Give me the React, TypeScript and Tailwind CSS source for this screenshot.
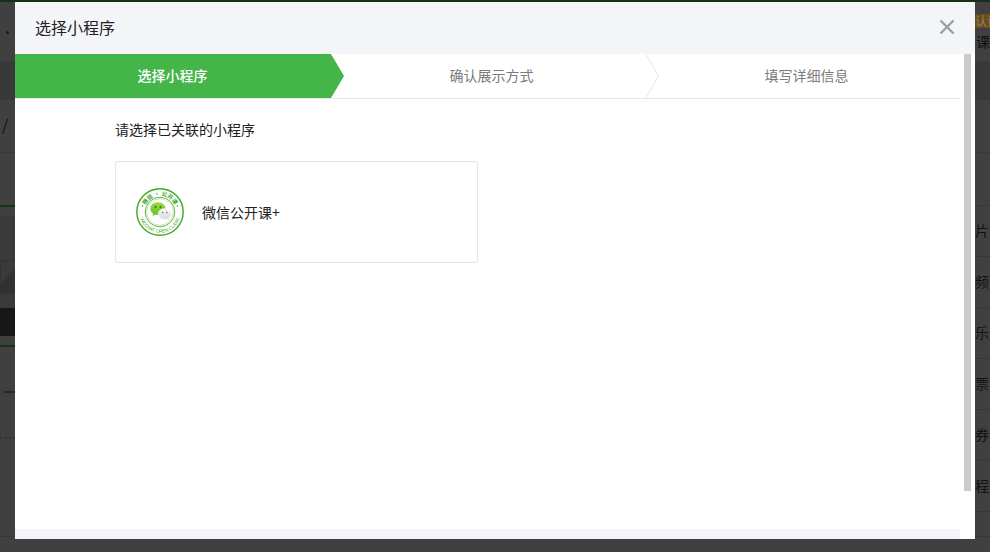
import { useState } from 'react'
import clsx from 'clsx'

const steps = ['选择小程序', '确认展示方式', '填写详细信息']

const mediaItems = ['片', '频', '乐', '票', '券', '程']

const programs = [{ id: 1, name: '微信公开课+' }]

function ProgramLogo() {
  return (
    <svg viewBox="0 0 48 48" className="h-12 w-12 shrink-0" aria-hidden="true">
      <defs>
        <path id="logo-top" d="M7.8 24a16.2 16.2 0 0 1 32.4 0" />
        <path id="logo-bottom" d="M3.2 24a20.8 20.8 0 0 0 41.6 0" />
        <linearGradient id="logo-green" x1="0" y1="0" x2="0" y2="1">
          <stop offset="0" stopColor="#9bdc45" />
          <stop offset="1" stopColor="#5fbd22" />
        </linearGradient>
        <linearGradient id="logo-grey" x1="0" y1="0" x2="0" y2="1">
          <stop offset="0" stopColor="#f7f8fa" />
          <stop offset="1" stopColor="#d5d8dc" />
        </linearGradient>
      </defs>
      <circle cx="24" cy="24" r="23.2" fill="#fff" stroke="#43ab22" strokeWidth="1.4" />
      <circle cx="24" cy="24" r="14.8" fill="none" stroke="#5cb840" strokeWidth="1" />
      <circle cx="24" cy="24" r="13.3" fill="none" stroke="#a5d98f" strokeWidth="0.6" />
      <g fill="#3aa31d" textAnchor="middle">
        <text fontSize="5.6" fontWeight="700" fontFamily="'Noto Sans CJK SC', sans-serif">
          <textPath href="#logo-top" startOffset="50%">
            微信 · 公开课
          </textPath>
        </text>
        <text fontSize="4.7" fontFamily="'Liberation Sans', sans-serif">
          <textPath href="#logo-bottom" startOffset="50%">
            WECHAT OPEN CLASS
          </textPath>
        </text>
      </g>
      <circle cx="6.6" cy="18" r="0.8" fill="#43ab22" />
      <circle cx="41.4" cy="18" r="0.8" fill="#43ab22" />
      <path
        d="M22 14.2c-4.3 0-7.6 2.8-7.6 6.5 0 2 1 3.8 2.8 5l-.8 2.4 3-1.5c.8.3 1.7.4 2.6.4 4.3 0 7.6-2.8 7.6-6.300s-3.300-6.500-7.600-6.500z"
        fill="url(#logo-green)"
      />
      <path
        d="M28.800 20.600c-3.700 0-6.600 2.400-6.600 5.400s2.900 5.400 6.600 5.400c.8 0 1.500-.1 2.200-.3l2.400 1.300-.6-2c1.600-1 2.600-2.600 2.600-4.400 0-3-2.900-5.400-6.600-5.400z"
        fill="url(#logo-grey)"
        stroke="#fff"
        strokeWidth="0.4"
      />
      <g fill="#2d6f16">
        <circle cx="19.5" cy="19" r="1" />
        <circle cx="24.500" cy="19" r="1" />
      </g>
      <g fill="#777">
        <circle cx="26.700" cy="24.600" r="0.8" />
        <circle cx="30.900" cy="24.600" r="0.8" />
      </g>
    </svg>
  )
}

function StepArrow({ active }: { active: boolean }) {
  return (
    <svg viewBox="0 0 14 44" className="absolute top-0 left-full z-10 h-11 w-3.5" aria-hidden="true">
      {active ? (
        <path d="M0 0h1l13 22L1 44H0z" fill="#44b549" />
      ) : (
        <path d="M0.5 0l13 22-13 22" fill="none" stroke="#e7e7eb" />
      )}
    </svg>
  )
}

/* The dimmed editor page under the dialog */
function EditorPage() {
  return (
    <div className="flex h-full flex-col overflow-hidden bg-[#404040] text-sm text-[#111]" aria-hidden="true">
      <div className="h-0.5 shrink-0 bg-[#162f16]" />
      <div className="flex h-15 shrink-0 justify-between">
        <div className="flex w-3.75 items-center justify-center">
          <span className="h-0.75 w-0.75 rounded-full bg-[#1c1c1c]" />
        </div>
        <div className="flex w-3.75 flex-col overflow-hidden pt-3">
          <span className="h-3.5 bg-[#6b4c18] text-xs leading-3.5 whitespace-nowrap text-[#8a8478]">认证</span>
          <span className="flex justify-end leading-6.5 whitespace-nowrap">开课</span>
        </div>
      </div>
      <div className="h-9.5 shrink-0 border-y border-[#353535] bg-[#393939]" />
      <div className="h-13 shrink-0 pl-0.5 text-base leading-12">/</div>
      <div className="flex flex-1 justify-between border-t border-[#393939]">
        <div className="flex w-3.75 flex-col">
          <div className="h-13" />
          <div className="h-0.5 bg-[#143314]" />
          <div className="h-2.25" />
          <div className="h-23 bg-[#3a3a3a] pt-11">
            <div className="rounded-l-xs border border-r-0 border-[#323232]">
              <svg viewBox="0 0 15 32" preserveAspectRatio="none" className="h-8 w-full">
                <path d="M0 22L15 8v24H0z" fill="#313131" />
              </svg>
            </div>
          </div>
          <div className="h-7 bg-[#171717]" />
          <div className="h-2.25" />
          <div className="h-0.5 bg-[#143314]" />
          <div className="h-11" />
          <div className="ml-1 h-0.5 bg-[#262626]" />
          <div className="mt-11 border-t-2 border-dotted border-[#333]" />
        </div>
        <ul className="w-3.75">
          <li className="h-13.25 border-b border-[#383838]" />
          {mediaItems.map((item) => (
            <li key={item} className="h-12.75 border-b border-[#383838] leading-12">
              {item}
            </li>
          ))}
        </ul>
      </div>
      <div className="h-4 shrink-0 border-t border-[#383838]" />
    </div>
  )
}

export default function App() {
  const [selected, setSelected] = useState<number | null>(null)
  const currentStep = 0

  return (
    <div className="h-screen font-['Noto_Sans_CJK_SC',sans-serif]">
      <EditorPage />

      <div className="fixed inset-0 flex px-3.75 pt-0.5 pb-3.25">
        <div role="dialog" aria-labelledby="dialog-title" className="flex flex-1 flex-col bg-white">
          {/* Header */}
          <header className="flex h-13 shrink-0 items-center justify-between bg-[#f4f5f9] px-5 pb-0.5">
            <h3 id="dialog-title" className="text-base text-[#222]">
              选择小程序
            </h3>
            <button type="button" aria-label="关闭">
              <svg viewBox="0 0 16 16" className="h-4 w-4" fill="none" stroke="#9c9ea0" strokeWidth="2.4">
                <path d="M1.5 1.5l13 13M14.5 1.5l-13 13" />
              </svg>
            </button>
          </header>

          <div className="flex flex-1">
            <div className="flex flex-1 flex-col">
              {/* Steps */}
              <ol className="grid grid-cols-3 border-b border-[#e7e7eb] text-sm">
                {steps.map((step, index) => (
                  <li
                    key={step}
                    className={clsx(
                      'relative h-11 text-center leading-10.5',
                      index === currentStep ? 'bg-[#44b549] font-medium text-white' : 'pl-2 text-[#7b7b7b]'
                    )}
                  >
                    {step}
                    {index < steps.length - 1 && <StepArrow active={index === currentStep} />}
                  </li>
                ))}
              </ol>

              {/* Program list */}
              <div className="flex-1 px-25 pt-4.5">
                <p className="text-sm leading-6 text-[#222]">请选择已关联的小程序</p>
                <div className="mt-5 grid grid-cols-2 gap-5">
                  {programs.map((program) => (
                    <button
                      key={program.id}
                      type="button"
                      aria-pressed={selected === program.id}
                      onClick={() => setSelected(program.id)}
                      className="flex h-25.5 items-center gap-4.5 rounded-xs border border-[#e7e7eb] px-5 text-sm text-[#222]"
                    >
                      <ProgramLogo />
                      <span>{program.name}</span>
                    </button>
                  ))}
                </div>
              </div>

              <footer className="h-2.5 bg-[#f4f5f9]" />
            </div>

            {/* Scrollbar */}
            <div className="w-3.75 pl-1">
              <div className="h-9/10 w-1.75 bg-[#cbcbcb]" />
            </div>
          </div>
        </div>
      </div>
    </div>
  )
}
